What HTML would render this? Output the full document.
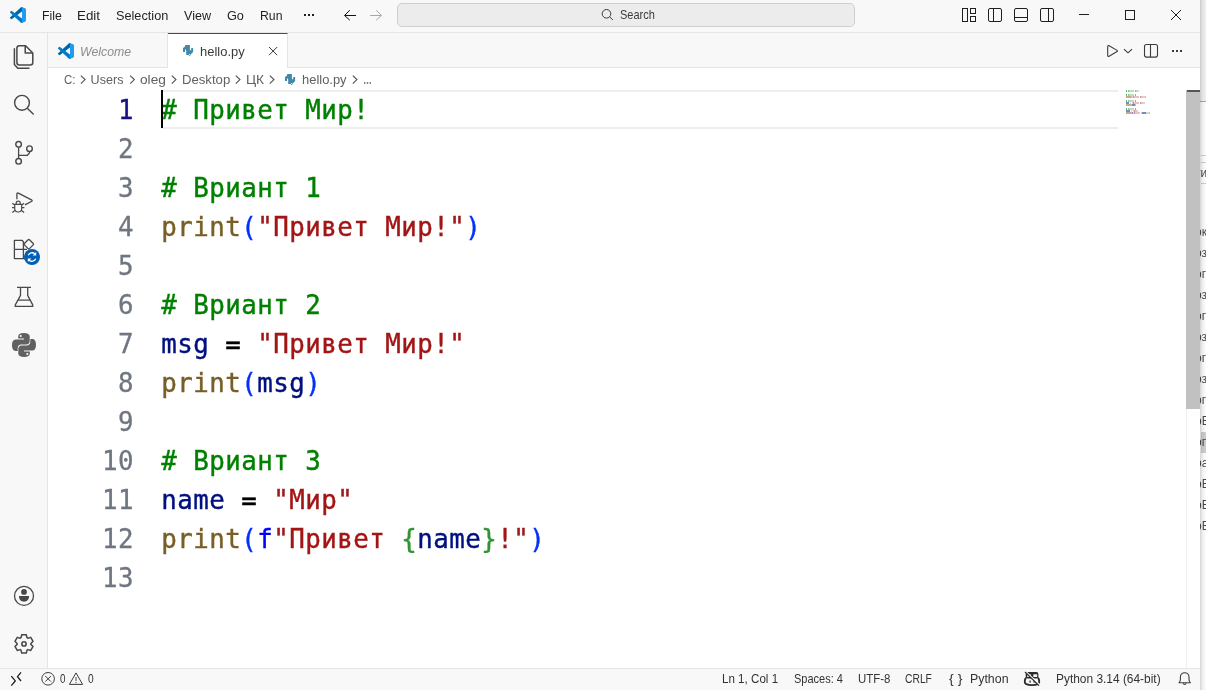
<!DOCTYPE html>
<html lang="ru">
<head>
<meta charset="utf-8">
<title>hello.py - Visual Studio Code</title>
<style>
*{box-sizing:border-box;margin:0;padding:0}
html,body{width:1206px;height:690px;overflow:hidden;background:#fff}
body{position:relative;font-family:"Liberation Sans","DejaVu Sans",sans-serif;font-size:12.6px;color:#1f1f1f}
svg{position:absolute;overflow:visible}
#win{position:absolute;left:0;top:0;width:1200px;height:690px;background:#fff;overflow:hidden;will-change:transform}
.t{position:absolute;white-space:nowrap;line-height:16px;height:16px}
#title{position:absolute;left:0;top:0;width:1200px;height:33px;background:#f8f8f8;border-bottom:1px solid #e5e5e5}
.menu{top:8px;font-size:12.6px;color:#1f1f1f}
#search{position:absolute;left:397px;top:3px;width:458px;height:24px;background:#ececec;border:1px solid #cecece;border-radius:5px}
#act{position:absolute;left:0;top:33px;width:48px;height:635px;background:#f8f8f8;border-right:1px solid #e5e5e5}
#tabs{position:absolute;left:48px;top:33px;width:1152px;height:35px;background:#f8f8f8;border-bottom:1px solid #e5e5e5}
.tab{position:absolute;top:0;height:35px;border-right:1px solid #e5e5e5}
#tab1{left:0;width:120px}
#tab2{left:120px;width:120px;background:#fff;border-top:1px solid #005fb8;height:36px}
#crumbs{position:absolute;left:48px;top:68px;width:1152px;height:22px;background:#fff}
.bc{top:72px;font-size:12.6px;color:#616161}
#editor{position:absolute;left:48px;top:90px;width:1152px;height:578px;background:#fff}
.ln{position:absolute;left:0;width:86px;text-align:right;margin-top:1px;-webkit-text-stroke:0.3px;height:39px;line-height:39px;font-family:"DejaVu Sans Mono","Liberation Mono",monospace;font-size:25.8px;letter-spacing:0.468px;color:#6e7681;white-space:pre}
.cl{position:absolute;left:113.3px;margin-top:1px;-webkit-text-stroke:0.4px;height:39px;line-height:39px;font-family:"DejaVu Sans Mono","Liberation Mono",monospace;font-size:25.8px;letter-spacing:0.468px;color:#000;white-space:pre}
.c{color:#008000}.s{color:#a31515}.f{color:#795e26}.v{color:#001080}.b1{color:#0431fa}.b2{color:#319331}.k{color:#0000ff}.o{position:relative;top:1.4px}
#curline{position:absolute;left:113px;top:0;width:957px;height:39px;border-top:2px solid #eeeeee;border-bottom:2px solid #eeeeee}
#cursor{position:absolute;left:113px;top:0;width:2px;height:38px;background:#000;z-index:5}
#status{position:absolute;left:0;top:668px;width:1200px;height:22px;background:#f8f8f8;border-top:1px solid #e5e5e5}
.st{top:671px;font-size:12.2px;color:#333}
#strip{position:absolute;left:1200px;top:0;width:6px;height:690px;background:#fff;overflow:hidden;will-change:transform}
</style>
</head>
<body>
<div id="win">
<div id="title"></div>
<div id="search"></div>
<div id="act"></div>
<div id="tabs"><div class="tab" id="tab1"></div><div class="tab" id="tab2"></div></div>
<div id="crumbs"></div>
<div id="editor">
<div id="curline"></div>
<div id="cursor"></div>
<div class="ln" style="top:0px;color:#171184">1</div>
<div class="ln" style="top:39px">2</div>
<div class="ln" style="top:78px">3</div>
<div class="ln" style="top:117px">4</div>
<div class="ln" style="top:156px">5</div>
<div class="ln" style="top:195px">6</div>
<div class="ln" style="top:234px">7</div>
<div class="ln" style="top:273px">8</div>
<div class="ln" style="top:312px">9</div>
<div class="ln" style="top:351px">10</div>
<div class="ln" style="top:390px">11</div>
<div class="ln" style="top:429px">12</div>
<div class="ln" style="top:468px">13</div>
<div class="cl" style="top:0px"><span class="c"># Привет Мир!</span></div>
<div class="cl" style="top:78px"><span class="c"># Вриант 1</span></div>
<div class="cl" style="top:117px"><span class="f">print</span><span class="b1">(</span><span class="s">"Привет Мир!"</span><span class="b1">)</span></div>
<div class="cl" style="top:195px"><span class="c"># Вриант 2</span></div>
<div class="cl" style="top:234px"><span class="v">msg</span><span class="o"> = </span><span class="s">"Привет Мир!"</span></div>
<div class="cl" style="top:273px"><span class="f">print</span><span class="b1">(</span><span class="v">msg</span><span class="b1">)</span></div>
<div class="cl" style="top:351px"><span class="c"># Вриант 3</span></div>
<div class="cl" style="top:390px"><span class="v">name</span><span class="o"> = </span><span class="s">"Мир"</span></div>
<div class="cl" style="top:429px"><span class="f">print</span><span class="b1">(</span><span class="k">f</span><span class="s">"Привет </span><span class="b2">{</span><span class="v">name</span><span class="b2">}</span><span class="s">!"</span><span class="b1">)</span></div>
</div>
<div style="position:absolute;left:1186px;top:90px;width:1px;height:578px;background:#efefef"></div>
<div style="position:absolute;left:1186px;top:90px;width:14px;height:319px;background:#c1c1c1"></div>
<div style="position:absolute;left:1187px;top:90px;width:13px;height:2px;background:#555"></div>
<svg style="left:0;top:0" width="1200" height="690"><rect x="1126" y="90" width="1" height="2" fill="#008000" opacity="0.60"/><rect x="1128" y="90" width="1" height="2" fill="#008000" opacity="0.45"/><rect x="1129" y="90" width="1" height="2" fill="#008000" opacity="0.26"/><rect x="1130" y="90" width="1" height="2" fill="#008000" opacity="0.26"/><rect x="1131" y="90" width="1" height="2" fill="#008000" opacity="0.26"/><rect x="1132" y="90" width="1" height="2" fill="#008000" opacity="0.26"/><rect x="1133" y="90" width="1" height="2" fill="#008000" opacity="0.26"/><rect x="1135" y="90" width="1" height="2" fill="#008000" opacity="0.45"/><rect x="1136" y="90" width="1" height="2" fill="#008000" opacity="0.26"/><rect x="1137" y="90" width="1" height="2" fill="#008000" opacity="0.26"/><rect x="1138" y="90" width="1" height="2" fill="#008000" opacity="0.20"/><rect x="1126" y="94" width="1" height="2" fill="#008000" opacity="0.60"/><rect x="1128" y="94" width="1" height="2" fill="#008000" opacity="0.45"/><rect x="1129" y="94" width="1" height="2" fill="#008000" opacity="0.26"/><rect x="1130" y="94" width="1" height="2" fill="#008000" opacity="0.26"/><rect x="1131" y="94" width="1" height="2" fill="#008000" opacity="0.26"/><rect x="1132" y="94" width="1" height="2" fill="#008000" opacity="0.26"/><rect x="1133" y="94" width="1" height="2" fill="#008000" opacity="0.26"/><rect x="1135" y="94" width="1" height="2" fill="#008000" opacity="0.50"/><rect x="1126" y="96" width="1" height="2" fill="#795e26" opacity="0.50"/><rect x="1127" y="96" width="1" height="2" fill="#795e26" opacity="0.50"/><rect x="1128" y="96" width="1" height="2" fill="#795e26" opacity="0.50"/><rect x="1129" y="96" width="1" height="2" fill="#795e26" opacity="0.50"/><rect x="1130" y="96" width="1" height="2" fill="#795e26" opacity="0.50"/><rect x="1131" y="96" width="1" height="2" fill="#0431fa" opacity="0.30"/><rect x="1132" y="96" width="1" height="2" fill="#a31515" opacity="0.20"/><rect x="1133" y="96" width="1" height="2" fill="#a31515" opacity="0.45"/><rect x="1134" y="96" width="1" height="2" fill="#a31515" opacity="0.26"/><rect x="1135" y="96" width="1" height="2" fill="#a31515" opacity="0.26"/><rect x="1136" y="96" width="1" height="2" fill="#a31515" opacity="0.26"/><rect x="1137" y="96" width="1" height="2" fill="#a31515" opacity="0.26"/><rect x="1138" y="96" width="1" height="2" fill="#a31515" opacity="0.26"/><rect x="1140" y="96" width="1" height="2" fill="#a31515" opacity="0.45"/><rect x="1141" y="96" width="1" height="2" fill="#a31515" opacity="0.26"/><rect x="1142" y="96" width="1" height="2" fill="#a31515" opacity="0.26"/><rect x="1143" y="96" width="1" height="2" fill="#a31515" opacity="0.20"/><rect x="1144" y="96" width="1" height="2" fill="#a31515" opacity="0.20"/><rect x="1145" y="96" width="1" height="2" fill="#0431fa" opacity="0.30"/><rect x="1126" y="100" width="1" height="2" fill="#008000" opacity="0.60"/><rect x="1128" y="100" width="1" height="2" fill="#008000" opacity="0.45"/><rect x="1129" y="100" width="1" height="2" fill="#008000" opacity="0.26"/><rect x="1130" y="100" width="1" height="2" fill="#008000" opacity="0.26"/><rect x="1131" y="100" width="1" height="2" fill="#008000" opacity="0.26"/><rect x="1132" y="100" width="1" height="2" fill="#008000" opacity="0.26"/><rect x="1133" y="100" width="1" height="2" fill="#008000" opacity="0.26"/><rect x="1135" y="100" width="1" height="2" fill="#008000" opacity="0.50"/><rect x="1126" y="102" width="1" height="2" fill="#001080" opacity="0.50"/><rect x="1127" y="102" width="1" height="2" fill="#001080" opacity="0.50"/><rect x="1128" y="102" width="1" height="2" fill="#001080" opacity="0.50"/><rect x="1130" y="102" width="1" height="2" fill="#3b3b3b" opacity="0.20"/><rect x="1132" y="102" width="1" height="2" fill="#a31515" opacity="0.20"/><rect x="1133" y="102" width="1" height="2" fill="#a31515" opacity="0.45"/><rect x="1134" y="102" width="1" height="2" fill="#a31515" opacity="0.26"/><rect x="1135" y="102" width="1" height="2" fill="#a31515" opacity="0.26"/><rect x="1136" y="102" width="1" height="2" fill="#a31515" opacity="0.26"/><rect x="1137" y="102" width="1" height="2" fill="#a31515" opacity="0.26"/><rect x="1138" y="102" width="1" height="2" fill="#a31515" opacity="0.26"/><rect x="1140" y="102" width="1" height="2" fill="#a31515" opacity="0.45"/><rect x="1141" y="102" width="1" height="2" fill="#a31515" opacity="0.26"/><rect x="1142" y="102" width="1" height="2" fill="#a31515" opacity="0.26"/><rect x="1143" y="102" width="1" height="2" fill="#a31515" opacity="0.20"/><rect x="1144" y="102" width="1" height="2" fill="#a31515" opacity="0.20"/><rect x="1126" y="104" width="1" height="2" fill="#795e26" opacity="0.50"/><rect x="1127" y="104" width="1" height="2" fill="#795e26" opacity="0.50"/><rect x="1128" y="104" width="1" height="2" fill="#795e26" opacity="0.50"/><rect x="1129" y="104" width="1" height="2" fill="#795e26" opacity="0.50"/><rect x="1130" y="104" width="1" height="2" fill="#795e26" opacity="0.50"/><rect x="1131" y="104" width="1" height="2" fill="#0431fa" opacity="0.30"/><rect x="1132" y="104" width="1" height="2" fill="#001080" opacity="0.50"/><rect x="1133" y="104" width="1" height="2" fill="#001080" opacity="0.50"/><rect x="1134" y="104" width="1" height="2" fill="#001080" opacity="0.50"/><rect x="1135" y="104" width="1" height="2" fill="#0431fa" opacity="0.30"/><rect x="1126" y="108" width="1" height="2" fill="#008000" opacity="0.60"/><rect x="1128" y="108" width="1" height="2" fill="#008000" opacity="0.45"/><rect x="1129" y="108" width="1" height="2" fill="#008000" opacity="0.26"/><rect x="1130" y="108" width="1" height="2" fill="#008000" opacity="0.26"/><rect x="1131" y="108" width="1" height="2" fill="#008000" opacity="0.26"/><rect x="1132" y="108" width="1" height="2" fill="#008000" opacity="0.26"/><rect x="1133" y="108" width="1" height="2" fill="#008000" opacity="0.26"/><rect x="1135" y="108" width="1" height="2" fill="#008000" opacity="0.50"/><rect x="1126" y="110" width="1" height="2" fill="#001080" opacity="0.50"/><rect x="1127" y="110" width="1" height="2" fill="#001080" opacity="0.50"/><rect x="1128" y="110" width="1" height="2" fill="#001080" opacity="0.50"/><rect x="1129" y="110" width="1" height="2" fill="#001080" opacity="0.50"/><rect x="1131" y="110" width="1" height="2" fill="#3b3b3b" opacity="0.20"/><rect x="1133" y="110" width="1" height="2" fill="#a31515" opacity="0.20"/><rect x="1134" y="110" width="1" height="2" fill="#a31515" opacity="0.45"/><rect x="1135" y="110" width="1" height="2" fill="#a31515" opacity="0.26"/><rect x="1136" y="110" width="1" height="2" fill="#a31515" opacity="0.26"/><rect x="1137" y="110" width="1" height="2" fill="#a31515" opacity="0.20"/><rect x="1126" y="112" width="1" height="2" fill="#795e26" opacity="0.50"/><rect x="1127" y="112" width="1" height="2" fill="#795e26" opacity="0.50"/><rect x="1128" y="112" width="1" height="2" fill="#795e26" opacity="0.50"/><rect x="1129" y="112" width="1" height="2" fill="#795e26" opacity="0.50"/><rect x="1130" y="112" width="1" height="2" fill="#795e26" opacity="0.50"/><rect x="1131" y="112" width="1" height="2" fill="#0431fa" opacity="0.30"/><rect x="1132" y="112" width="1" height="2" fill="#0000ff" opacity="0.50"/><rect x="1133" y="112" width="1" height="2" fill="#a31515" opacity="0.20"/><rect x="1134" y="112" width="1" height="2" fill="#a31515" opacity="0.45"/><rect x="1135" y="112" width="1" height="2" fill="#a31515" opacity="0.26"/><rect x="1136" y="112" width="1" height="2" fill="#a31515" opacity="0.26"/><rect x="1137" y="112" width="1" height="2" fill="#a31515" opacity="0.26"/><rect x="1138" y="112" width="1" height="2" fill="#a31515" opacity="0.26"/><rect x="1139" y="112" width="1" height="2" fill="#a31515" opacity="0.26"/><rect x="1141" y="112" width="1" height="2" fill="#319331" opacity="0.30"/><rect x="1142" y="112" width="1" height="2" fill="#001080" opacity="0.50"/><rect x="1143" y="112" width="1" height="2" fill="#001080" opacity="0.50"/><rect x="1144" y="112" width="1" height="2" fill="#001080" opacity="0.50"/><rect x="1145" y="112" width="1" height="2" fill="#001080" opacity="0.50"/><rect x="1146" y="112" width="1" height="2" fill="#319331" opacity="0.30"/><rect x="1147" y="112" width="1" height="2" fill="#a31515" opacity="0.20"/><rect x="1148" y="112" width="1" height="2" fill="#a31515" opacity="0.20"/><rect x="1149" y="112" width="1" height="2" fill="#0431fa" opacity="0.30"/></svg>
<div id="status"></div>
<div class="t menu" id="m_file" style="left:42.22px;transform-origin:0 50%;transform:scaleX(0.9787);">File</div>
<div class="t menu" id="m_edit" style="left:77.1px;transform-origin:0 50%;transform:scaleX(1.0602);">Edit</div>
<div class="t menu" id="m_sel" style="left:115.65px;transform-origin:0 50%;transform:scaleX(1.0090);">Selection</div>
<div class="t menu" id="m_view" style="left:184.35px;transform-origin:0 50%;transform:scaleX(0.9982);">View</div>
<div class="t menu" id="m_go" style="left:227.25px;transform-origin:0 50%;transform:scaleX(1.0064);">Go</div>
<div class="t menu" id="m_run" style="left:259.97px;transform-origin:0 50%;transform:scaleX(0.9722);">Run</div>
<div class="t " id="t_search" style="left:620.25px;top:7px;transform-origin:0 50%;transform:scaleX(0.9034);font-size:12.2px;color:#3b3b3b;">Search</div>
<div class="t " id="t_welcome" style="left:80.45px;top:43.5px;transform-origin:0 50%;transform:scaleX(0.9780);font-size:12.6px;font-style:italic;color:#8c8c8c;">Welcome</div>
<div class="t " id="t_hello" style="left:199.68px;top:43.5px;transform-origin:0 50%;transform:scaleX(1.0295);font-size:12.6px;color:#3b3b3b;">hello.py</div>
<div class="t bc" id="b_c" style="left:64.25px;transform-origin:0 50%;transform:scaleX(0.9091);">C:</div>
<div class="t bc" id="b_users" style="left:90.6px;transform-origin:0 50%;transform:scaleX(1.0000);">Users</div>
<div class="t bc" id="b_oleg" style="left:140.21px;transform-origin:0 50%;transform:scaleX(1.0880);">oleg</div>
<div class="t bc" id="b_desktop" style="left:182.01px;transform-origin:0 50%;transform:scaleX(1.0435);">Desktop</div>
<div class="t bc" id="b_ck" style="left:245.96px;transform-origin:0 50%;transform:scaleX(1.0855);">ЦК</div>
<div class="t bc" id="b_hello" style="left:302.23px;transform-origin:0 50%;transform:scaleX(1.0270);">hello.py</div>
<div class="t st" id="s_e0" style="left:59.87px;transform-origin:0 50%;transform:scaleX(0.8084);">0</div>
<div class="t st" id="s_w0" style="left:88.06px;transform-origin:0 50%;transform:scaleX(0.8333);">0</div>
<div class="t st" id="s_ln" style="left:722.19px;transform-origin:0 50%;transform:scaleX(0.9513);">Ln 1, Col 1</div>
<div class="t st" id="s_sp" style="left:793.89px;transform-origin:0 50%;transform:scaleX(0.9037);">Spaces: 4</div>
<div class="t st" id="s_utf" style="left:857.56px;transform-origin:0 50%;transform:scaleX(0.9379);">UTF-8</div>
<div class="t st" id="s_crlf" style="left:905.11px;transform-origin:0 50%;transform:scaleX(0.8455);">CRLF</div>
<div class="t st" id="s_br" style="left:949.29px;transform-origin:0 50%;transform:scaleX(1.1573);">{ }</div>
<div class="t st" id="s_py" style="left:970.13px;transform-origin:0 50%;transform:scaleX(1.0151);">Python</div>
<div class="t st" id="s_pyv" style="left:1055.97px;transform-origin:0 50%;transform:scaleX(0.9772);">Python 3.14 (64-bit)</div>
<svg style="left:10px;top:7px" width="16" height="16" viewBox="0 0 100 100"><path fill="#0065A9" d="M96.461 10.796 75.857.876a6.230 6.230 0 0 0-7.107 1.207l-67.451 61.500a4.167 4.167 0 0 0 .004 6.162l5.510 5.009a4.167 4.167 0 0 0 5.320.236l81.228-61.620c2.725-2.067 6.639-.124 6.639 3.297v-.240a6.250 6.250 0 0 0-3.539-5.630Z"/><path fill="#007ACC" d="m96.461 89.204-20.604 9.920a6.229 6.229 0 0 1-7.107-1.207l-67.451-61.500a4.167 4.167 0 0 1 .004-6.162l5.510-5.009a4.167 4.167 0 0 1 5.320-.236l81.228 61.620c2.725 2.067 6.639.124 6.639-3.297v.240a6.250 6.250 0 0 1-3.539 5.630Z"/><path fill="#1F9CF0" d="M75.858 99.126a6.232 6.232 0 0 1-7.108-1.210c2.306 2.307 6.250.674 6.250-2.588V4.672c0-3.262-3.944-4.895-6.250-2.589a6.232 6.232 0 0 1 7.108-1.210l20.600 9.908A6.250 6.250 0 0 1 100 16.413v67.174a6.250 6.250 0 0 1-3.541 5.633l-20.601 9.906Z"/></svg>
<svg style="left:58px;top:43px" width="16" height="16" viewBox="0 0 100 100"><path fill="#0065A9" d="M96.461 10.796 75.857.876a6.230 6.230 0 0 0-7.107 1.207l-67.451 61.500a4.167 4.167 0 0 0 .004 6.162l5.510 5.009a4.167 4.167 0 0 0 5.320.236l81.228-61.620c2.725-2.067 6.639-.124 6.639 3.297v-.240a6.250 6.250 0 0 0-3.539-5.630Z"/><path fill="#007ACC" d="m96.461 89.204-20.604 9.920a6.229 6.229 0 0 1-7.107-1.207l-67.451-61.500a4.167 4.167 0 0 1 .004-6.162l5.510-5.009a4.167 4.167 0 0 1 5.320-.236l81.228 61.620c2.725 2.067 6.639.124 6.639-3.297v.240a6.250 6.250 0 0 1-3.539 5.630Z"/><path fill="#1F9CF0" d="M75.858 99.126a6.232 6.232 0 0 1-7.108-1.210c2.306 2.307 6.250.674 6.250-2.588V4.672c0-3.262-3.944-4.895-6.250-2.589a6.232 6.232 0 0 1 7.108-1.210l20.600 9.908A6.250 6.250 0 0 1 100 16.413v67.174a6.250 6.250 0 0 1-3.541 5.633l-20.601 9.906Z"/></svg>
<svg style="left:178px;top:40px" width="20" height="20" viewBox="178 40 20 20"><path fill="#4388aa" d="M185.100 44.900H189.900V50.100L191.200 50.500V48H193.100V51.900L190.600 54.400V55.200L189.500 56L188.500 54.900H186.200V50.400L185 49V52H183V47.900L185.100 46.400z"/><circle cx="189.450" cy="54.500" r="0.550" fill="#fff"/></svg>
<svg style="left:280px;top:69px" width="20" height="20" viewBox="178 40 20 20"><path fill="#4388aa" d="M185.100 44.900H189.900V50.100L191.200 50.500V48H193.100V51.900L190.600 54.400V55.200L189.500 56L188.500 54.900H186.200V50.400L185 49V52H183V47.900L185.100 46.400z"/><circle cx="189.450" cy="54.500" r="0.550" fill="#fff"/></svg>
<svg style="left:12px;top:333px" width="24" height="24" viewBox="0 0 24 24" preserveAspectRatio="none"><path fill="#616161" fill-rule="evenodd" d="M11.8 0C8 0 6.2 1.3 6.2 3.2V5.6h5.8v.8H3.5C1.3 6.4 0 8.5 0 12c0 3.500 1.300 5.900 3.500 5.900H5.700v-3c0-2 1.600-3.500 3.500-3.500h5.300c1.800 0 3.200-1.400 3.200-3.200V3.200C17.700 1.300 15.800 0 11.800 0zM8.700 1.900a1.100 1.100 0 1 1 0 2.200 1.100 1.100 0 0 1 0-2.200z"/><path fill="#616161" fill-rule="evenodd" transform="rotate(180 12 12)" d="M11.8 0C8 0 6.2 1.3 6.2 3.2V5.6h5.8v.8H3.5C1.3 6.4 0 8.5 0 12c0 3.500 1.300 5.900 3.500 5.900H5.700v-3c0-2 1.600-3.500 3.500-3.500h5.300c1.800 0 3.200-1.400 3.200-3.200V3.200C17.700 1.300 15.800 0 11.800 0zM8.700 1.900a1.100 1.100 0 1 1 0 2.200 1.100 1.100 0 0 1 0-2.200z"/></svg>
<svg style="left:0;top:0" width="1200" height="690"><g fill="#1f1f1f"><rect x="304" y="14" width="2" height="2"/><rect x="308" y="14" width="2" height="2"/><rect x="312" y="14" width="2" height="2"/></g>
<g fill="none" stroke="#111" stroke-width="1"><path d="M356 15.500H344.600M349.800 10.200l-5.200 5.300 5.200 4.700"/></g>
<g fill="none" stroke="#a8a8a8" stroke-width="1"><path d="M370 15.500H381.400M376.200 10.200l5.200 5.300-5.200 4.700"/></g>
<g fill="none" stroke="#3b3b3b" stroke-width="1"><circle cx="606.500" cy="13.800" r="4.300"/><path d="M609.600 16.900l3.300 3"/></g>
<g fill="none" stroke="#1f1f1f" stroke-width="1"><rect x="962.500" y="8.500" width="5" height="13"/><rect x="970.500" y="8.500" width="5" height="5"/><rect x="970.500" y="16.500" width="5" height="5"/><rect x="988.500" y="8.500" width="13" height="13" rx="1.500"/><path d="M993.500 8.500v13"/><rect x="1014.500" y="8.500" width="13" height="13" rx="1.500"/><path d="M1014.500 17.500h13"/><rect x="1040.500" y="8.500" width="13" height="13" rx="1.500"/><path d="M1048.500 8.500v13"/></g>
<g fill="none" stroke="#1f1f1f" stroke-width="1"><path d="M1079 14.500h10"/><rect x="1125.500" y="10.500" width="9" height="9"/><path d="M1171 10l10 10M1181 10l-10 10"/></g>
<g fill="none" stroke="#3b3b3b" stroke-width="1"><path d="M269 47l8.200 8.200M277.200 47l-8.200 8.200"/></g>
<g fill="none" stroke="#3b3b3b" stroke-width="1.100" stroke-linejoin="round"><path d="M1107.700 46.200v9.600a.7.700 0 0 0 1 .6l8.400-4.800a.7.700 0 0 0 0-1.200l-8.400-4.800a.7.700 0 0 0-1 .6z"/><path d="M1124 49.200l4 3.600 4-3.600"/><rect x="1144.500" y="44.500" width="13" height="12.600" rx="2"/><path d="M1150.500 44.500v12.600"/></g>
<g fill="#3b3b3b"><rect x="1172" y="50" width="2" height="2"/><rect x="1176" y="50" width="2" height="2"/><rect x="1180" y="50" width="2" height="2"/></g>
<g fill="none" stroke="#5a5a5a" stroke-width="1.250"><path d="M80.9 75.6l4.100 4-4.100 4" /><path d="M130.2 75.6l4.100 4-4.100 4" /><path d="M171.8 75.6l4.100 4-4.100 4" /><path d="M235.8 75.6l4.100 4-4.100 4" /><path d="M269.8 75.6l4.100 4-4.100 4" /><path d="M352.8 75.6l4.100 4-4.100 4" /></g>
<g fill="#616161"><rect x="364" y="82.200" width="1.400" height="1.600"/><rect x="366.800" y="82.200" width="1.400" height="1.600"/><rect x="369.600" y="82.200" width="1.400" height="1.600"/></g>
<g fill="none" stroke="#484848" stroke-width="1.400" stroke-linejoin="round">
<path d="M19.400 45.800h6.200l7.200 7.200v9.600a2.500 2.500 0 0 1-2.500 2.500h-10.900a2.500 2.500 0 0 1-2.500-2.500v-14.300a2.500 2.500 0 0 1 2.500-2.500z" stroke-width="1.500"/><path d="M25.200 46v6.900h7.400" stroke-width="1.500"/><path d="M14.400 48.300v16.200l3.400 3.700h11.700" stroke-width="1.500"/>
<circle cx="22" cy="102.800" r="7.400"/><path d="M27.300 108.200l6.400 6.200"/>
<circle cx="18.600" cy="144.300" r="2.800"/><circle cx="18.600" cy="161.300" r="2.800"/><circle cx="29.500" cy="148.700" r="2.800"/><path d="M18.600 147.100v11.400M18.600 155.300h8.800l2.100-2.400v-1.400" stroke-width="1.300"/>
<path d="M16.900 199.200v-5.200a1 1 0 0 1 1.500-.9l13.500 7.100a.6.600 0 0 1 0 1l-7 3.700" stroke-width="1.300"/>
<path d="M16.200 204.200v-1a2 2 0 0 1 4 0v1M14.700 204.300h7v4.200a3.500 3.500 0 0 1-7 0zM12.300 203.200l2.400 1.800M24.100 203.200l-2.400 1.800M12 207.700h2.700M24.400 207.700h-2.700M12.300 212.400l2.900-2.200M24.100 212.400l-2.900-2.200" stroke-width="1.200"/>
<path d="M14.400 240.300h7.600l1.400 1.400v16.900h-9zM14.400 249.400h12.600M23.400 258.600h3" stroke-width="1.300"/>
<path d="M28.100 239.800a1 1 0 0 1 1.400 0l3.700 3.700a1 1 0 0 1 0 1.400l-3.700 3.700a1 1 0 0 1-1.400 0l-3.700-3.700a1 1 0 0 1 0-1.400z" stroke-width="1.300"/>
<path d="M17 287.400h14M20.500 287.400v8l-5.200 9.500v1.500h17.400v-1.500l-5-9.500v-8M18.300 300.200h11.400" stroke-width="1.300"/>
<circle cx="24" cy="595.900" r="9.500" stroke-width="1.300"/>
<path d="M21.73 634.78L26.27 634.78L27.02 637.70L27.86 638.18L30.76 637.37L33.04 641.31L30.88 643.42L30.88 644.38L33.04 646.49L30.76 650.43L27.86 649.62L27.02 650.10L26.27 653.02L21.73 653.02L20.98 650.10L20.14 649.62L17.24 650.43L14.96 646.49L17.12 644.38L17.12 643.42L14.96 641.31L17.24 637.37L20.14 638.18L20.98 637.70Z" stroke-width="1.500"/><circle cx="24" cy="643.900" r="2.100" stroke-width="1.600"/>
</g>
<g fill="#484848"><circle cx="24" cy="591.900" r="2.900"/><path d="M19 596.100h10v.8a5 4.800 0 0 1-10 0z"/></g>
<circle cx="32" cy="257" r="8" fill="#005fb8"/>
<g fill="none" stroke="#fff" stroke-width="1.300"><path d="M28.200 255.200a4.200 4.200 0 0 1 6.600-1.400M35.800 258.800a4.200 4.200 0 0 1-6.600 1.400"/></g>
<g fill="#fff"><path d="M36.200 251.900v3.600h-3.600zM27.800 262.100v-3.600h3.600z"/></g>
<g fill="none" stroke="#1f1f1f" stroke-width="1.300"><path d="M11.300 676.200l4 4.700-4 4.700M21 672.400l-3.500 4.300 3.500 4.300"/></g>
<g fill="none" stroke="#3b3b3b" stroke-width="1"><circle cx="48.100" cy="678.800" r="6.300"/><path d="M45.300 676l5.600 5.600M50.900 676l-5.600 5.600"/><path d="M76 672.900l6.600 11.500h-13.200z" stroke-linejoin="round"/><path d="M76 677v4M76 682v1.200" stroke-width=".9"/></g>
<g><rect x="1025.700" y="672" width="12.700" height="6.600" rx="2" fill="#2b2b2b"/><rect x="1027.200" y="674.200" width="3.600" height="2.800" rx=".6" fill="#f8f8f8"/><rect x="1033.300" y="674.200" width="3.900" height="2.800" rx=".6" fill="#f8f8f8"/><path d="M1026.200 677.800C1024.400 678.800 1024.800 680.800 1024.800 682C1024.800 684.100 1028 685.100 1032 685.100C1036 685.100 1039.200 684.100 1039.200 682C1039.200 680.800 1039.600 678.800 1037.800 677.800" fill="none" stroke="#2b2b2b" stroke-width="1.900"/><path d="M1030.100 680.600v2.200M1034.100 680.600v2.200" stroke="#2b2b2b" stroke-width="1.200" fill="none"/><path d="M1026 671.700l13.800 13.400" stroke="#f8f8f8" stroke-width="1.500" fill="none"/><path d="M1025 672l14 13.600" stroke="#2b2b2b" stroke-width="1.200" fill="none"/></g>
<g fill="none" stroke="#3b3b3b" stroke-width="1.100" stroke-linejoin="round"><path d="M1179 682.800c1-1 1.400-2 1.400-3.600v-2.200a4.300 4.300 0 0 1 8.600 0v2.200c0 1.600.4 2.600 1.400 3.600zM1183.200 683.400a1.600 1.600 0 0 0 3 0"/></g></svg>
</div>
<div id="strip">
<div style="position:absolute;left:0;top:0;width:6px;height:101px;background:#f3f3f3"></div>
<div style="position:absolute;left:0;top:101px;width:6px;height:1px;background:#a9a9a9"></div>
<div style="position:absolute;left:1px;top:155px;width:5px;height:1px;background:#d0d0d0"></div>
<div style="position:absolute;left:1px;top:162px;width:5px;height:1px;background:#d0d0d0"></div>
<div style="position:absolute;left:1px;top:183px;width:5px;height:1px;background:#d0d0d0"></div>
<div style="position:absolute;left:1px;top:432px;width:5px;height:21px;background:#cfcfcf"></div>
<div style="position:absolute;left:-5px;top:165px;line-height:16px;font-size:12px;color:#4a4a4a;white-space:nowrap">ти</div>
<div style="position:absolute;left:-5px;top:224px;line-height:16px;font-size:12px;color:#4a4a4a;white-space:nowrap">ок</div>
<div style="position:absolute;left:-5px;top:245px;line-height:16px;font-size:12px;color:#4a4a4a;white-space:nowrap">оз</div>
<div style="position:absolute;left:-5px;top:266px;line-height:16px;font-size:12px;color:#4a4a4a;white-space:nowrap">ог</div>
<div style="position:absolute;left:-5px;top:287px;line-height:16px;font-size:12px;color:#4a4a4a;white-space:nowrap">оз</div>
<div style="position:absolute;left:-5px;top:308px;line-height:16px;font-size:12px;color:#4a4a4a;white-space:nowrap">ог</div>
<div style="position:absolute;left:-5px;top:329px;line-height:16px;font-size:12px;color:#4a4a4a;white-space:nowrap">оз</div>
<div style="position:absolute;left:-5px;top:350px;line-height:16px;font-size:12px;color:#4a4a4a;white-space:nowrap">ог</div>
<div style="position:absolute;left:-5px;top:371px;line-height:16px;font-size:12px;color:#4a4a4a;white-space:nowrap">оз</div>
<div style="position:absolute;left:-5px;top:392px;line-height:16px;font-size:12px;color:#4a4a4a;white-space:nowrap">ог</div>
<div style="position:absolute;left:-5px;top:413px;line-height:16px;font-size:12px;color:#4a4a4a;white-space:nowrap">оЕ</div>
<div style="position:absolute;left:-5px;top:434px;line-height:16px;font-size:12px;color:#4a4a4a;white-space:nowrap">оп</div>
<div style="position:absolute;left:-5px;top:455px;line-height:16px;font-size:12px;color:#4a4a4a;white-space:nowrap">оа</div>
<div style="position:absolute;left:-5px;top:476px;line-height:16px;font-size:12px;color:#4a4a4a;white-space:nowrap">оЕ</div>
<div style="position:absolute;left:-5px;top:497px;line-height:16px;font-size:12px;color:#4a4a4a;white-space:nowrap">оЕ</div>
<div style="position:absolute;left:-5px;top:518px;line-height:16px;font-size:12px;color:#4a4a4a;white-space:nowrap">оЕ</div>
<div style="position:absolute;left:0;top:0;width:6px;height:690px;background:linear-gradient(90deg,rgba(0,0,0,0.17),rgba(0,0,0,0.06) 45%,rgba(0,0,0,0.01))"></div>
</div>
</body>
</html>
